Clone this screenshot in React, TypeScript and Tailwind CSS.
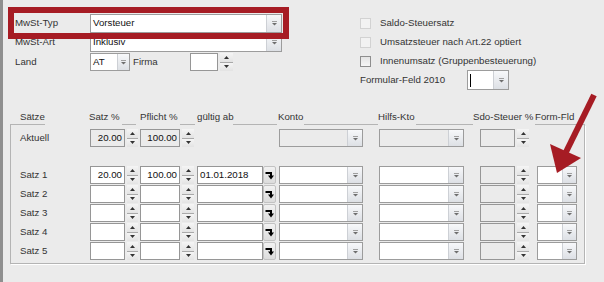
import clsx from "clsx";

const LINE = "border-[#b4b4b4]";

function Caret() {
    return (
        <svg width="7" height="5" viewBox="0 0 7 5">
            <path d="M1 0.5H6" stroke="#a0a0a0" strokeWidth="1" />
            <path d="M1 2H6L3.5 4.5Z" fill="#6e6e6e" />
        </svg>
    );
}

function Combo({
    className,
    text,
    disabled,
    btn = "w-[15px]",
    cursor,
}: {
    className?: string;
    text?: string;
    disabled?: boolean;
    btn?: string;
    cursor?: boolean;
}) {
    return (
        <div
            className={clsx(
                "flex h-full border border-[#9c9c9c]",
                disabled ? "bg-[#ebebeb]" : "bg-white",
                className
            )}
        >
            <div className="flex-1 flex items-center pl-[2px] text-[#111] overflow-hidden whitespace-nowrap">
                {text}
                {cursor && <span className="w-px h-[13px] bg-black" />}
            </div>
            <div
                className={clsx(
                    "flex items-center justify-center border-l border-[#cdd0d5] bg-linear-to-b from-[#f7f8fa] to-[#dde0e5]",
                    btn
                )}
            >
                <Caret />
            </div>
        </div>
    );
}

function Spin({ className }: { className?: string }) {
    return (
        <div className={clsx("flex flex-col h-full", className)}>
            <div className="flex-1 flex items-center justify-center bg-linear-to-b from-[#f5f5f5] to-[#e3e3e3] border-b border-[#a9a9a9]">
                <svg width="5" height="3" viewBox="0 0 5 3">
                    <path d="M0 3H5L2.5 0Z" fill="#333" />
                </svg>
            </div>
            <div className="flex-1 flex items-center justify-center bg-linear-to-b from-[#f5f5f5] to-[#e3e3e3]">
                <svg width="5" height="3" viewBox="0 0 5 3">
                    <path d="M0 0H5L2.5 3Z" fill="#333" />
                </svg>
            </div>
        </div>
    );
}

function Field({
    className,
    text,
    disabled,
    right,
}: {
    className?: string;
    text?: string;
    disabled?: boolean;
    right?: boolean;
}) {
    return (
        <div
            className={clsx(
                "h-full border border-[#969696] flex items-center px-[2px] whitespace-nowrap text-[#111]",
                disabled ? "bg-[#ebebeb]" : "bg-white",
                right && "justify-end",
                className
            )}
        >
            {text}
        </div>
    );
}

function DateBtn() {
    return (
        <div className="w-[13px] h-full flex items-center justify-center rounded-[2px] border border-[#c2c2c2] bg-linear-to-b from-[#f2f2f2] to-[#dcdcdc]">
            <svg width="9" height="9" viewBox="0 0 9 9">
                <path d="M0.5 2H6V5" stroke="#000" strokeWidth="2" fill="none" />
                <path d="M3 4.5H9L6 8.5Z" fill="#000" />
            </svg>
        </div>
    );
}

function Check({ dark }: { dark?: boolean }) {
    return (
        <div
            className={clsx(
                "w-[11px] h-[11px] border",
                dark ? "border-[#8e8e8e] bg-linear-to-b from-[#e4e4e4] to-[#f6f6f6]" : "border-[#d2d2d2] bg-[#f2f2f2]"
            )}
        />
    );
}

function SatzRow({
    label,
    aktuell,
    satz,
    pflicht,
    date,
    className,
}: {
    label: string;
    aktuell?: boolean;
    satz?: string;
    pflicht?: string;
    date?: string;
    className?: string;
}) {
    return (
        <div className={clsx("flex h-[18px]", className)}>
            <div className="w-[79px] pl-[9px] flex items-center">{label}</div>
            <Field className="w-[35px]" text={satz} right disabled={aktuell} />
            <Spin className="ml-[2px] w-[11px]" />
            <Field className="ml-[2px] w-[40px]" text={pflicht} right disabled={aktuell} />
            <Spin className="ml-[2px] w-[12px]" />
            {aktuell ? (
                <div className="ml-[3px] w-[79px]" />
            ) : (
                <div className="ml-[3px] w-[79px] flex h-full">
                    <Field className="w-[66px]" text={date} />
                    <DateBtn />
                </div>
            )}
            <Combo className="ml-[3px] w-[84px]" disabled={aktuell} />
            <Combo className="ml-[16px] w-[85px]" disabled={aktuell} />
            <Field className="ml-[16px] w-[35px]" disabled />
            <Spin className="ml-[2px] w-[12px]" />
            {!aktuell && <Combo className="ml-[8px] w-[40px]" btn="w-[14px]" />}
        </div>
    );
}

const saetze = [
    { label: "Satz 1", satz: "20.00", pflicht: "100.00", date: "01.01.2018" },
    { label: "Satz 2" },
    { label: "Satz 3" },
    { label: "Satz 4" },
    { label: "Satz 5" },
];

export default function App() {
    return (
        <div className="relative w-[604px] h-[282px] overflow-hidden bg-[#ebebeb] flex font-['Liberation_Sans',Arial,sans-serif] text-[9.7px] text-[#333]">
            {/* Fensterrand links */}
            <div className="w-[3px] h-full bg-[#8f8f8f]" />

            <div className="flex-1 flex flex-col">
                {/* obere Felder */}
                <div className="flex pt-[14px] pl-[12px] items-start">
                    <div className="w-[345px] flex flex-col">
                        <div className="flex h-[19px] items-center">
                            <span className="w-[75px]">MwSt-Typ</span>
                            <Combo className="w-[192px]" text="Vorsteuer" />
                        </div>
                        <div className="flex h-[19px] items-center">
                            <span className="w-[75px]">MwSt-Art</span>
                            <Combo className="w-[192px]" text="Inklusiv" />
                        </div>
                        <div className="flex h-[18px] mt-[1px] items-center">
                            <span className="w-[75px]">Land</span>
                            <Combo className="w-[40px]" text="AT" btn="w-[12px]" />
                            <span className="ml-[3px] w-[57px]">Firma</span>
                            <Field className="w-[28px]" />
                            <Spin className="ml-[2px] w-[13px]" />
                        </div>
                    </div>

                    <div className="flex flex-col">
                        <div className="flex h-[19px] items-center">
                            <Check />
                            <span className="ml-[9px]">Saldo-Steuersatz</span>
                        </div>
                        <div className="flex h-[19px] items-center">
                            <Check />
                            <span className="ml-[9px]">Umsatzsteuer nach Art.22 optiert</span>
                        </div>
                        <div className="flex h-[19px] items-center">
                            <Check dark />
                            <span className="ml-[9px]">Innenumsatz (Gruppenbesteuerung)</span>
                        </div>
                        <div className="flex h-[20px] -mt-[1px] items-center">
                            <span className="w-[107px]">Formular-Feld 2010</span>
                            <Combo className="w-[42px]" cursor />
                        </div>
                    </div>
                </div>

                {/* Sätze */}
                <div className="ml-[7px] mt-[20px] w-[575px] flex flex-col">
                    <div className="flex h-[15px] leading-[14px] whitespace-nowrap">
                        <div className={clsx("w-[35px] pl-[10px] border-b", LINE)}>Sätze</div>
                        <div className="w-[44px]" />
                        <div className="w-[33px]">Satz %</div>
                        <div className={clsx("w-[14px] border-b", LINE)} />
                        <div className="w-[4px]" />
                        <div className="w-[40px]">Pflicht %</div>
                        <div className={clsx("w-[15px] border-b", LINE)} />
                        <div className="w-[2px]" />
                        <div className="w-[36px]">gültig ab</div>
                        <div className={clsx("w-[44px] border-b", LINE)} />
                        <div className="w-[1px]" />
                        <div className="w-[26px]">Konto</div>
                        <div className={clsx("w-[74px] border-b", LINE)} />
                        <div className="w-[38px]">Hilfs-Kto</div>
                        <div className={clsx("w-[57px] border-b", LINE)} />
                        <div className="w-[62px]">Sdo-Steuer %</div>
                        <div className={clsx("w-[50px] border-b", LINE)}>Form-Fld</div>
                    </div>

                    <div
                        className={clsx(
                            "flex flex-col border-l border-r border-b pt-[4px] pb-[3px] shadow-[1px_1px_0_#ffffff]",
                            LINE
                        )}
                    >
                        <SatzRow label="Aktuell" aktuell satz="20.00" pflicht="100.00" />
                        {saetze.map((s, i) => (
                            <SatzRow
                                key={s.label}
                                label={s.label}
                                satz={s.satz}
                                pflicht={s.pflicht}
                                date={s.date}
                                className={i === 0 ? "mt-[19px]" : "mt-[1px]"}
                            />
                        ))}
                    </div>
                </div>
            </div>

            {/* Markierungen */}
            <div className="absolute left-[8px] top-[7px] w-[281px] h-[32px] border-[6px] border-[#a61c24] z-10 pointer-events-none" />
            <svg
                className="absolute left-0 top-0 z-10 pointer-events-none"
                width="604"
                height="282"
                viewBox="0 0 604 282"
            >
                <path d="M594 95L566 152" stroke="#a61c24" strokeWidth="6" />
                <path d="M557 173L550 144L581 158Z" fill="#a61c24" />
            </svg>
        </div>
    );
}
